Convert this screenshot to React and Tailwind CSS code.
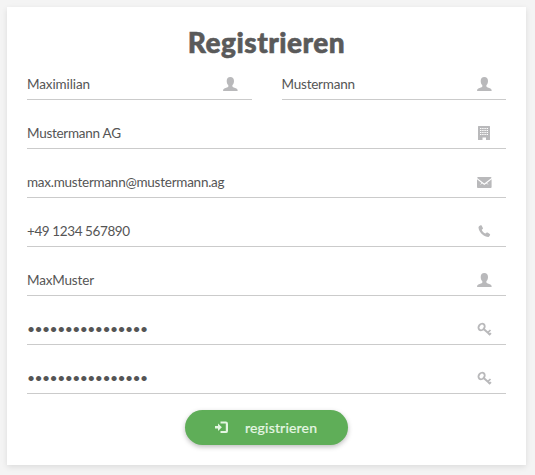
import { useState } from 'react'

const ICONS = {
  user: (
    <path d="M7.300.1C5 .1 3.700 1.700 3.700 3.900c0 1.700.6 3.300 1.600 4.200v1.300c0 .4-.3.700-.8.900L1.300 11.500C.5 11.800.1 12.400.1 13.200v.8h14.500v-.8c0-.8-.4-1.400-1.200-1.700l-3.200-1.300c-.5-.2-.8-.5-.8-.9V8.100c1-.9 1.600-2.500 1.600-4.200C11 1.700 9.600.1 7.300.1z" />
  ),
  building: (
    <path
      fillRule="evenodd"
      d="M1.500 0h11a.5.500 0 0 1 .5.5v13a.5.500 0 0 1-.5.5H9v-2.500H5.500V14h-4a.5.500 0 0 1-.5-.5V.5a.5.500 0 0 1 .5-.5zM3 2v1h1.400V2zm2.200 0v1h1.400V2zm2.200 0v1h1.400V2zm2.200 0v1H11V2zM3 4v1h1.400V4zm2.200 0v1h1.400V4zm2.200 0v1h1.400V4zm2.200 0v1H11V4zM3 6v1h1.400V6zm2.200 0v1h1.400V6zm2.200 0v1h1.400V6zm2.200 0v1H11V6zM3 8v1h1.400V8zm2.200 0v1h1.400V8zm2.200 0v1h1.400V8zm2.200 0v1H11V8z"
    />
  ),
  mail: (
    <>
      <path d="M1.300 2h11.900c.7 0 1.200.4 1.300 1L7.300 8.600.1 3C.2 2.400.6 2 1.300 2z" />
      <path d="M0 4.300 4.600 8 2.800 10.100 5.300 8.600 7.300 10.100l2-1.500 2.500 1.500L10 8l4.600-3.700V12c0 .6-.5 1-1.200 1H1.300C.5 13 0 12.600 0 12z" />
    </>
  ),
  phone: (
    <path d="M2.300 2 3.500 1.300c.4-.2.900-.1 1.100.3l1.300 2.300c.2.400.1.800-.2 1.100l-1 .8c.6 1.700 2 3.100 3.800 3.800l.9-.9c.3-.3.800-.4 1.200-.1l2.200 1.400c.4.300.5.700.2 1.200l-.9 1.200c-.5.600-1.400.7-2.300.4C5.500 11.600 2.300 8.200 1.600 4.300c-.2-1 0-1.900.7-2.300z" />
  ),
  key: (
    <g fill="none" stroke="currentColor">
      <ellipse cx="4.600" cy="5" rx="2.800" ry="3.500" strokeWidth="1.900" transform="rotate(40 4.600 5)" />
      <path d="M6.700 6.900 12.900 12.400" strokeWidth="2" />
      <path d="M13.500 8 10.700 10.700M14 11.200l-2 2" strokeWidth="1.700" />
    </g>
  ),
  login: (
    <>
      <path d="M0 6h3V3.600L6.900 7.300 3 11V8.600H0z" />
      <path d="M5.500 1.500h5.300A2.200 2.200 0 0 1 13 3.700v7.200a2.200 2.200 0 0 1-2.200 2.200H5.500V11h5.300V3.600H5.500z" />
    </>
  ),
}

function Icon({ name, className }) {
  return (
    <svg viewBox="0 0 15 15" fill="currentColor" className={`shrink-0 w-[15px] h-[15px] ${className}`}>
      {ICONS[name]}
    </svg>
  )
}

function Field({ name, label, icon, type = 'text', text = 'text-[13.5px] tracking-[-0.22px]', value, onChange }) {
  return (
    <label className="flex-1 flex items-center h-[34px] border-b border-[#cbcbcb] pr-[14px] pt-[3px]">
      <input
        type={type}
        name={name}
        aria-label={label}
        value={value}
        onChange={onChange}
        className={`flex-1 min-w-0 h-6 pb-px bg-transparent outline-none text-[#555] ${text}`}
      />
      <Icon name={icon} className="text-[#b9b9bb]" />
    </label>
  )
}

const PASSWORD_TEXT = 'text-[14px] tracking-[-0.58px]'

const ROWS = [
  [
    { name: 'firstName', label: 'Vorname', icon: 'user', text: 'text-[13.5px] tracking-[-0.1px]' },
    { name: 'lastName', label: 'Nachname', icon: 'user' },
  ],
  [{ name: 'company', label: 'Firma', icon: 'building', text: 'text-[13.5px] tracking-[-0.27px]' }],
  [{ name: 'email', label: 'E-Mail', icon: 'mail', text: 'text-[13.5px] tracking-[-0.25px]' }],
  [{ name: 'phone', label: 'Telefon', icon: 'phone', text: 'text-[13.5px] tracking-[-0.4px]' }],
  [{ name: 'username', label: 'Benutzername', icon: 'user', text: 'text-[13.5px] tracking-[-0.16px]' }],
  [{ name: 'password', label: 'Passwort', icon: 'key', type: 'password', text: PASSWORD_TEXT }],
  [{ name: 'confirm', label: 'Passwort wiederholen', icon: 'key', type: 'password', text: PASSWORD_TEXT }],
]

export default function App() {
  const [form, setForm] = useState({
    firstName: 'Maximilian',
    lastName: 'Mustermann',
    company: 'Mustermann AG',
    email: 'max.mustermann@mustermann.ag',
    phone: '+49 1234 567890',
    username: 'MaxMuster',
    password: 'maxmustermann123',
    confirm: 'maxmustermann123',
  })

  const handleChange = (e) => setForm({ ...form, [e.target.name]: e.target.value })

  return (
    <div className="h-screen bg-[#f4f4f4] pt-[7px] pl-[7px] pr-[9px] pb-[10px] font-['Lato',sans-serif]">
      <form
        onSubmit={e => e.preventDefault()}
        className="h-full flex flex-col bg-white px-5 shadow-[0_2px_6px_rgba(0,0,0,0.10)]"
      >
        <h1 className="mt-[17px] h-[42px] text-center text-[28px] leading-[36px] tracking-[0.5px] font-black text-[#5a5a5a] [-webkit-text-stroke:0.6px_#5a5a5a]">
          Registrieren
        </h1>

        <div className="flex flex-col gap-[15px]">
          {ROWS.map(row => (
            <div key={row[0].name} className="flex gap-[30px]">
              {row.map(field => (
                <Field key={field.name} {...field} value={form[field.name]} onChange={handleChange} />
              ))}
            </div>
          ))}
        </div>

        <button
          type="submit"
          className="mt-4 self-center flex items-center w-[163px] h-[35px] pl-[30px] rounded-full bg-[#5fae58] text-[#e4f6e2] text-[14px] tracking-[0.16px] font-medium [-webkit-text-stroke:0.15px_#e4f6e2] shadow-[0_2px_5px_rgba(0,0,0,0.26)]"
        >
          <Icon name="login" className="mr-[15px]" />
          registrieren
        </button>
      </form>
    </div>
  )
}
